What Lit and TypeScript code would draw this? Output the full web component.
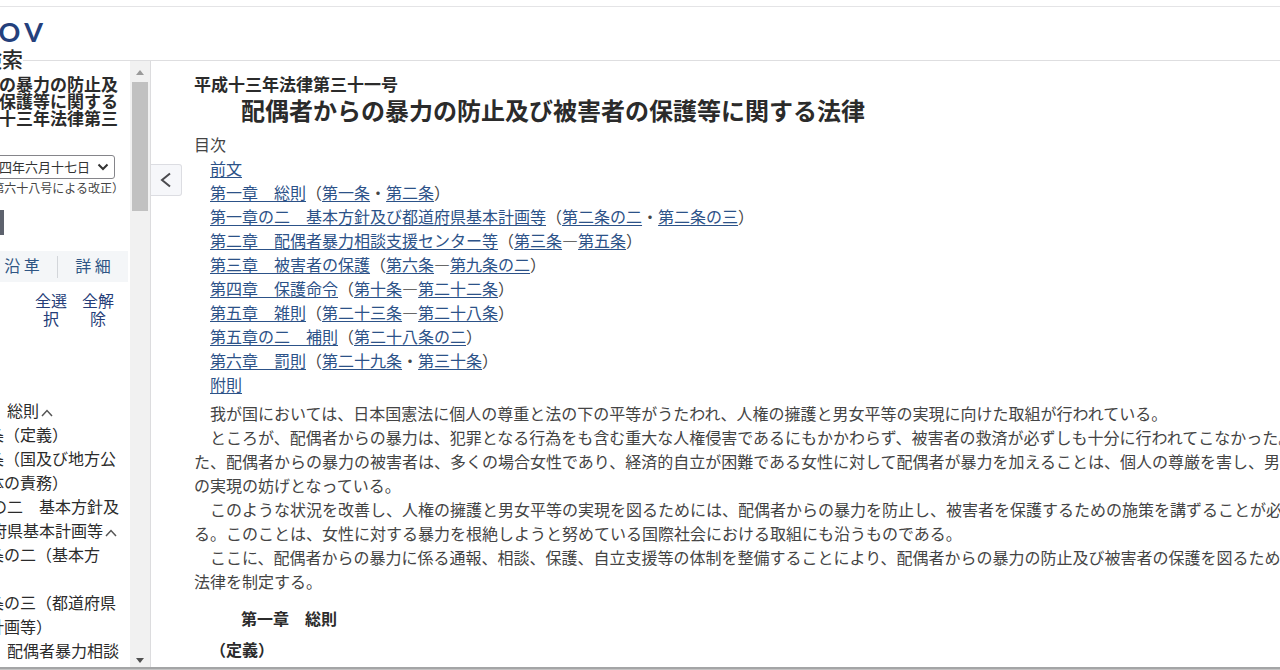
import { LitElement, html, css } from "lit";
import { customElement } from "lit/decorators.js";

type TocRow = { title: string; from?: string; sep?: string; to?: string };

const TOC: TocRow[] = [
  { title: "前文" },
  { title: "第一章　総則", from: "第一条", sep: "・", to: "第二条" },
  { title: "第一章の二　基本方針及び都道府県基本計画等", from: "第二条の二", sep: "・", to: "第二条の三" },
  { title: "第二章　配偶者暴力相談支援センター等", from: "第三条", sep: "―", to: "第五条" },
  { title: "第三章　被害者の保護", from: "第六条", sep: "―", to: "第九条の二" },
  { title: "第四章　保護命令", from: "第十条", sep: "―", to: "第二十二条" },
  { title: "第五章　雑則", from: "第二十三条", sep: "―", to: "第二十八条" },
  { title: "第五章の二　補則", from: "第二十八条の二" },
  { title: "第六章　罰則", from: "第二十九条", sep: "・", to: "第三十条" },
  { title: "附則" },
];

const PREAMBLE = [
  "我が国においては、日本国憲法に個人の尊重と法の下の平等がうたわれ、人権の擁護と男女平等の実現に向けた取組が行われている。",
  "ところが、配偶者からの暴力は、犯罪となる行為をも含む重大な人権侵害であるにもかかわらず、被害者の救済が必ずしも十分に行われてこなかった。また、配偶者からの暴力の被害者は、多くの場合女性であり、経済的自立が困難である女性に対して配偶者が暴力を加えることは、個人の尊厳を害し、男女平等の実現の妨げとなっている。",
  "このような状況を改善し、人権の擁護と男女平等の実現を図るためには、配偶者からの暴力を防止し、被害者を保護するための施策を講ずることが必要である。このことは、女性に対する暴力を根絶しようと努めている国際社会における取組にも沿うものである。",
  "ここに、配偶者からの暴力に係る通報、相談、保護、自立支援等の体制を整備することにより、配偶者からの暴力の防止及び被害者の保護を図るため、この法律を制定する。",
];

const TREE = [
  { title: "第一章　総則", open: true, items: ["第一条（定義）", "第二条（国及び地方公共団体の責務）"] },
  { title: "第一章の二　基本方針及び都道府県基本計画等", open: true, items: ["第二条の二（基本方針）", "第二条の三（都道府県基本計画等）"] },
  { title: "第二章　配偶者暴力相談", open: false, items: [] as string[] },
];

@customElement("law-sidebar")
export class LawSidebar extends LitElement {
  static styles = css`
    :host {
      display: flex;
      min-height: 0;
      overflow: hidden;
      border-right: 1px solid #dcdcde;
    }
    .content {
      flex: 1;
      min-width: 0;
      overflow: hidden;
      display: flex;
      flex-direction: column;
      align-items: flex-end;
      box-sizing: border-box;
      padding-top: 14px;
    }
    .content > * {
      flex: none;
    }
    .name {
      margin: 0 12px 0 0;
      font-size: 17px;
      line-height: 17px;
      font-weight: 700;
      text-align: right;
      white-space: nowrap;
    }
    .version {
      margin: 29px 15px 0 0;
      position: relative;
      display: flex;
      align-items: center;
    }
    .version select {
      appearance: none;
      width: 180px;
      height: 24px;
      padding: 0 24px 2px 0;
      border: 1px solid #85858a;
      border-radius: 3px;
      background: #fff;
      color: #333;
      font: inherit;
      font-size: 13px;
      text-align: right;
      text-align-last: right;
    }
    .version svg {
      position: absolute;
      right: 6px;
      top: 8px;
      pointer-events: none;
    }
    .amend {
      margin: 0 6px 0 0;
      font-size: 12px;
      line-height: 18px;
      white-space: nowrap;
      color: #444;
    }
    .print {
      width: 60px;
      height: 25px;
      margin: 13px 126px 0 0;
      padding: 0;
      border: 0;
      background: #5d626d;
      color: #fff;
      font: inherit;
      font-size: 12px;
    }
    .tabs {
      width: 200px;
      height: 31px;
      margin: 16px 2px 0 0;
      display: flex;
      justify-content: flex-end;
      align-items: center;
      background: #f4f6f8;
    }
    .tabs button {
      width: 71px;
      height: 22px;
      padding: 0 0 4px;
      border: 0;
      border-left: 1px solid #d3d6da;
      background: none;
      color: #2f5584;
      font: inherit;
      line-height: 18px;
      white-space: nowrap;
    }
    .picks {
      display: flex;
      gap: 15px;
      margin: 9px 16px 0 0;
    }
    .picks button {
      width: 32px;
      padding: 0;
      border: 0;
      background: none;
      color: #253d78;
      font: inherit;
      line-height: 18px;
    }
    .tree {
      width: 176px;
      margin: 71px 11px 0 0;
      line-height: 24px;
    }
    .tree ul {
      margin: 0;
      padding: 0 0 0 13px;
      list-style: none;
    }
    .tree a {
      color: inherit;
      text-decoration: none;
    }
    .scroll {
      width: 20px;
      display: flex;
      flex-direction: column;
      align-items: center;
      justify-content: space-between;
      background: #f1f1f1;
      box-sizing: border-box;
      padding: 9px 0 4px;
    }
    .upper {
      display: flex;
      flex-direction: column;
      align-items: center;
      gap: 7px;
    }
    .thumb {
      width: 16px;
      height: 129px;
      background: #c1c1c1;
    }
    svg {
      display: block;
    }
    .chapter svg {
      display: inline-block;
      margin-left: 2px;
    }
  `;

  render() {
    return html`
      <div class="content">
        <h2 class="name">配偶者からの暴力の防止及<br />び被害者の保護等に関する<br />法律（平成十三年法律第三</h2>
        <div class="version">
          <select aria-label="施行日">
            <option>令和四年六月十七日</option>
          </select>
          <svg width="12" height="8" viewBox="0 0 12 8" fill="none" stroke="#333" stroke-width="2">
            <path d="M1.5 1.5 6 6l4.500-4.500" />
          </svg>
        </div>
        <div class="amend">（令和四年法律第六十八号による改正）</div>
        <button class="print" aria-label="表示"></button>
        <div class="tabs">
          <button>沿 革</button>
          <button>詳 細</button>
        </div>
        <div class="picks">
          <button>全選択</button>
          <button>全解除</button>
        </div>
        <nav class="tree">
          ${TREE.map(
            (c) => html`
              <div class="chapter"><a href="#">${c.title}</a>${c.open
                  ? html`<svg width="12" height="8" viewBox="0 0 12 8" fill="none" stroke="#555" stroke-width="1.500"><path d="M1 7 6 1.500 11 7" /></svg>`
                  : ""}</div>
              <ul>
                ${c.items.map((i) => html`<li><a href="#">${i}</a></li>`)}
              </ul>
            `
          )}
        </nav>
      </div>
      <div class="scroll">
        <div class="upper">
          <svg width="8" height="5" viewBox="0 0 8 5"><path d="M0 5 4 0l4 5z" fill="#9a9a9a" /></svg>
          <div class="thumb"></div>
        </div>
        <svg width="8" height="5" viewBox="0 0 8 5"><path d="M0 0h8L4 5z" fill="#505050" /></svg>
      </div>
    `;
  }
}

@customElement("law-document")
export class LawDocument extends LitElement {
  static styles = css`
    :host {
      display: block;
      min-width: 0;
      overflow: hidden;
      padding: 11px 0 0 12px;
      line-height: 24px;
    }
    .number {
      margin: 0;
      font-size: 17px;
      line-height: 24px;
      font-weight: 700;
    }
    .title {
      margin: 0 0 0 47px;
      font-size: 24px;
      line-height: 28px;
      font-weight: 700;
    }
    .label {
      margin: 8px 0 0;
      color: #444;
    }
    .toc {
      margin: 0;
      padding: 0 0 0 16px;
      list-style: none;
      color: #444;
    }
    .toc a {
      color: #2c5288;
      text-underline-offset: 2px;
    }
    .preamble {
      width: 71em;
      margin-top: 5px;
      color: #444;
    }
    .preamble p {
      margin: 0;
      text-indent: 1em;
    }
    .chapter {
      margin: 13px 0 0 47px;
      font-size: 16px;
      font-weight: 700;
    }
    .caption {
      margin: 7px 0 0 16px;
      font-size: 16px;
      font-weight: 700;
    }
  `;

  render() {
    return html`
      <p class="number">平成十三年法律第三十一号</p>
      <h1 class="title">配偶者からの暴力の防止及び被害者の保護等に関する法律</h1>
      <p class="label">目次</p>
      <ul class="toc">
        ${TOC.map(
          (r) => html`<li><a href="#">${r.title}</a>${r.from
              ? html`（<a href="#">${r.from}</a>${r.to ? html`${r.sep}<a href="#">${r.to}</a>` : ""}）`
              : ""}</li>`
        )}
      </ul>
      <div class="preamble">${PREAMBLE.map((p) => html`<p>${p}</p>`)}</div>
      <h2 class="chapter">第一章　総則</h2>
      <h3 class="caption">（定義）</h3>
    `;
  }
}

@customElement("app-root")
export class AppRoot extends LitElement {
  static styles = css`
    :host {
      display: flex;
      flex-direction: column;
      height: 100vh;
      box-sizing: border-box;
      overflow: hidden;
      padding-top: 6px;
      background: #fff;
      color: #2b2b2b;
      font-family: "Noto Sans CJK JP", sans-serif;
      font-size: 16px;
      text-spacing-trim: space-all;
    }
    .header {
      flex: none;
      height: 53px;
      border-top: 1px solid #e4e4e6;
      border-bottom: 1px solid #dedee0;
    }
    .main {
      flex: 1;
      min-height: 0;
      display: grid;
      grid-template-columns: 151px 31px minmax(0, 1fr);
    }
    .brand {
      width: 43px;
      display: flex;
      flex-direction: column;
      align-items: flex-end;
      padding-top: 9px;
    }
    .logo {
      display: flex;
      gap: 4px;
      color: #24407c;
      font-family: Lato, sans-serif;
      font-size: 27px;
      line-height: 32px;
      font-weight: 700;
      text-decoration: none;
      white-space: nowrap;
    }
    .service {
      position: relative;
      margin: -2px 20px 0 0;
      font-size: 21px;
      line-height: 24px;
      font-weight: 500;
      white-space: nowrap;
      background: #fff;
    }
    .collapse {
      height: 32px;
      margin-top: 103px;
      padding: 0;
      display: flex;
      align-items: center;
      justify-content: center;
      border: 1px solid #dcdde2;
      border-left: 0;
      border-radius: 0 3px 3px 0;
      background: #f6f7fa;
    }
    .edge {
      flex: none;
      height: 1px;
      border-top: 2px solid #a4a5a6;
      background: #c4c4c4;
    }
  `;

  render() {
    return html`
      <header class="header">
        <div class="brand">
          <a class="logo" href="#" aria-label="e-GOV"><span>e-G</span><span>O</span><span>V</span></a>
          <div class="service">法令検索</div>
        </div>
      </header>
      <div class="main">
        <law-sidebar></law-sidebar>
        <button class="collapse" aria-label="目次を閉じる">
          <svg width="12" height="16" viewBox="0 0 12 16" fill="none" stroke="#4a4a4e" stroke-width="2">
            <path d="M10 1.500 2 8l8 6.500" />
          </svg>
        </button>
        <law-document></law-document>
      </div>
      <div class="edge"></div>
    `;
  }
}
